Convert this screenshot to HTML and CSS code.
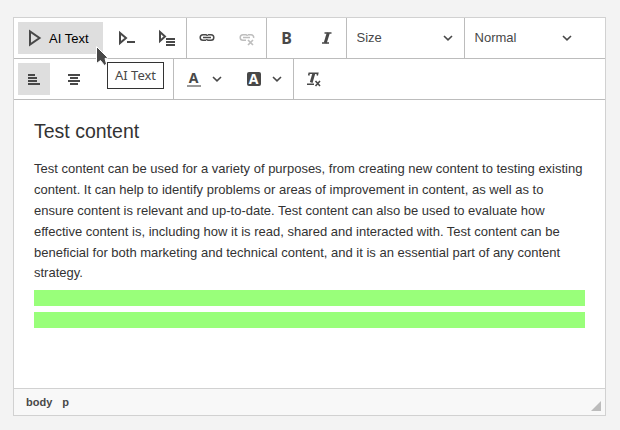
FILE: index.html
```html
<!DOCTYPE html>
<html lang="en">
<head>
<meta charset="utf-8">
<meta name="viewport" content="width=device-width, initial-scale=1">
<title>Editor</title>
<link rel="stylesheet" href="styles.css">
</head>
<body>
<main class="editor">
  <div class="toolbar" role="toolbar" aria-label="Editor toolbar">
    <div class="row">
      <div class="group">
        <div class="tip-anchor">
          <button class="btn btn-label active" type="button">
            <svg class="icon" width="16" height="18" viewBox="0 0 16 18"><path d="M3 2.500V15.500L12.500 9Z" fill="none" stroke="#484848" stroke-width="2"/></svg>
            AI Text
          </button>
          <svg class="cursor" width="16" height="24" viewBox="0 0 16 24"><path d="M1.500 1.500V18.500L5.500 15.500L9.500 20.500L11.500 19L10 13.500L13 13Z" fill="#484848" stroke="#fff" stroke-width="1"/></svg>
          <span class="tooltip" role="tooltip">AI Text</span>
        </div>
        <button class="btn" type="button" aria-label="AI prompt">
          <svg class="icon" width="18" height="18" viewBox="0 0 18 18"><path d="M2 4V14L8 9Z" fill="none" stroke="#484848" stroke-width="2"/><path d="M9 13H17" stroke="#484848" stroke-width="2"/></svg>
        </button>
        <button class="btn" type="button" aria-label="AI commands">
          <svg class="icon" width="18" height="18" viewBox="0 0 18 18"><path d="M2 3V12L7 7.500Z" fill="none" stroke="#484848" stroke-width="2"/><path d="M8 10H17M8 13H17M8 16H17" stroke="#484848" stroke-width="2"/></svg>
        </button>
      </div>
      <div class="group">
        <button class="btn" type="button" aria-label="Link">
          <svg class="icon" width="16" height="16" viewBox="0 0 16 16"><path d="M7 4.700H4A2.700 2.700 0 0 0 4 10.300H7M9 4.700H12A2.700 2.700 0 0 1 12 10.300H9M4 7.500H12M7 4.700Q8.300 4.700 8.300 6M9 10.300Q7.700 10.300 7.700 9" fill="none" stroke="#484848" stroke-width="1.500"/></svg>
        </button>
        <button class="btn" type="button" aria-label="Unlink" disabled>
          <svg class="icon" width="16" height="16" viewBox="0 0 16 16"><path d="M7 10.300H4A2.700 2.700 0 0 1 4 4.700H7M9 4.700H12A2.700 2.700 0 0 1 14.600 8M4 7.500H11M7 4.700Q8.300 4.700 8.300 6" fill="none" stroke="#bebebe" stroke-width="1.500"/><path d="M9 10L14 15M14 10L9 15" stroke="#bebebe" stroke-width="1.700"/></svg>
        </button>
      </div>
      <div class="group">
        <button class="btn glyph" type="button" aria-label="Bold">B</button>
        <button class="btn" type="button" aria-label="Italic">
          <svg class="icon" width="16" height="16" viewBox="0 0 16 16"><path d="M5.500 3H12.500M3 13H10" stroke="#484848" stroke-width="1.600"/><path d="M9.300 3L6.200 13" stroke="#484848" stroke-width="3"/></svg>
        </button>
      </div>
      <div class="group combo">
        <select aria-label="Font size"><option>Size</option><option>12</option><option>14</option></select>
        <svg class="chevron" width="10" height="8" viewBox="0 0 10 8"><path d="M1 2L5 5.800L9 2" fill="none" stroke="#484848" stroke-width="1.600"/></svg>
      </div>
      <div class="group combo">
        <select aria-label="Paragraph format"><option>Normal</option><option>Heading</option></select>
        <svg class="chevron" width="10" height="8" viewBox="0 0 10 8"><path d="M1 2L5 5.800L9 2" fill="none" stroke="#484848" stroke-width="1.600"/></svg>
      </div>
    </div>
    <div class="row">
      <div class="group">
        <button class="btn active" type="button" aria-label="Align left">
          <svg class="icon" width="16" height="16" viewBox="0 0 16 16"><path d="M2 4H9M2 7H11M2 10H11M2 13H14" stroke="#484848" stroke-width="2"/></svg>
        </button>
        <button class="btn" type="button" aria-label="Align center">
          <svg class="icon" width="16" height="16" viewBox="0 0 16 16"><path d="M2 4H14M4 7H12M2 10H14M4 13H12" stroke="#484848" stroke-width="2"/></svg>
        </button>
        <button class="btn" type="button" aria-label="Align right">
          <svg class="icon" width="16" height="16" viewBox="0 0 16 16"><path d="M7 4H14M4 7H14M5 10H14M2 13H14" stroke="#484848" stroke-width="2"/></svg>
        </button>
        <button class="btn" type="button" aria-label="Justify">
          <svg class="icon" width="16" height="16" viewBox="0 0 16 16"><path d="M2 4H14M2 7H14M2 10H14M2 13H14" stroke="#484848" stroke-width="2"/></svg>
        </button>
      </div>
      <div class="group">
        <button class="btn btn-split" type="button" aria-label="Text color">
          <span class="letter letter-line">A</span>
          <svg class="icon" width="10" height="8" viewBox="0 0 10 8"><path d="M1 2L5 5.800L9 2" fill="none" stroke="#484848" stroke-width="1.600"/></svg>
        </button>
        <button class="btn btn-split" type="button" aria-label="Background color">
          <span class="letter letter-box">A</span>
          <svg class="icon" width="10" height="8" viewBox="0 0 10 8"><path d="M1 2L5 5.800L9 2" fill="none" stroke="#484848" stroke-width="1.600"/></svg>
        </button>
      </div>
      <div class="group">
        <button class="btn" type="button" aria-label="Remove format">
          <svg class="icon" width="16" height="16" viewBox="0 0 16 16"><path d="M2.700 4.500L3.200 2.200H11.700L11.200 4.500M1 13.300H8" fill="none" stroke="#484848" stroke-width="1.600"/><path d="M7.800 2.500L5.200 11.500" stroke="#484848" stroke-width="2.800"/><path d="M9.500 10L14 15M14 10L9.500 15" stroke="#484848" stroke-width="1.600"/></svg>
        </button>
      </div>
    </div>
  </div>
  <article class="content">
    <h1>Test content</h1>
    <p>Test content can be used for a variety of purposes, from creating new content to testing existing content. It can help to identify problems or areas of improvement in content, as well as to ensure content is relevant and up-to-date. Test content can also be used to evaluate how effective content is, including how it is read, shared and interacted with. Test content can be beneficial for both marketing and technical content, and it is an essential part of any content strategy.</p>
    <div class="placeholder"></div>
    <div class="placeholder"></div>
  </article>
  <footer class="status">
    <nav class="path" aria-label="Element path"><a href="#">body</a><a href="#">p</a></nav>
    <svg class="grip" width="10" height="10" viewBox="0 0 10 10"><path d="M10 0V10H0Z" fill="#bcbcbc"/></svg>
  </footer>
</main>
</body>
</html>
```
FILE: styles.css
```css
* {
  box-sizing: border-box;
}

body {
  margin: 0;
  min-height: 100vh;
  padding: 17px 14px 14px 13px;
  display: flex;
  background: #f3f3f3;
  color: #333;
  font: 13px "Liberation Sans", Arial, sans-serif;
}

.editor {
  flex: 1;
  min-width: 0;
  display: flex;
  flex-direction: column;
  border: 1px solid #d1d1d1;
  background: #fff;
}

.row {
  display: flex;
  border-bottom: 1px solid #bcbcbc;
}

.group {
  display: flex;
  gap: 8px;
  padding: 4px 3px 4px 4px;
  border-right: 1px solid #bcbcbc;
}

.group:last-child {
  border-right: 0;
}

.btn {
  display: flex;
  align-items: center;
  justify-content: center;
  width: 32px;
  height: 32px;
  margin: 0;
  padding: 0;
  border: 0;
  background: transparent;
  color: #000;
  font: inherit;
}

.btn-label {
  width: auto;
  gap: 6px;
  padding: 0 14px 0 9px;
}

.btn-split {
  width: 52px;
  gap: 11px;
}

.glyph {
  color: #484848;
  font: bold 16px "Noto Sans", sans-serif;
}

.letter {
  width: 14px;
  font: bold 14px/14px "Noto Sans", sans-serif;
  text-align: center;
}

.letter-line {
  border-bottom: 2px solid #999;
  color: #484848;
}

.letter-box {
  border-radius: 2px;
  background: #484848;
  color: #fff;
}

.active {
  background: #dedede;
}

.icon {
  flex: none;
}

.tip-anchor {
  position: relative;
}

.cursor {
  position: absolute;
  top: 23px;
  left: 77px;
}

.tooltip {
  position: absolute;
  z-index: 1;
  top: 40px;
  left: 89px;
  padding: 0 7px;
  border: 1px solid #333;
  background: #fff;
  color: #484848;
  font: 13px/25px "Noto Sans", sans-serif;
  white-space: nowrap;
}

.combo {
  width: 118px;
  padding: 0;
  position: relative;
}

.combo select {
  width: 100%;
  height: 40px;
  padding: 0 26px 2px 10px;
  border: 0;
  appearance: none;
  background: transparent;
  color: #484848;
  font: inherit;
}

.chevron {
  position: absolute;
  top: 16px;
  right: 11px;
  pointer-events: none;
}

.content {
  flex: 1;
  padding: 20px;
  line-height: 1.6;
}

h1 {
  margin: 0 0 16px;
  font-size: 1.5em;
  font-weight: normal;
  line-height: 1.2;
}

p {
  margin: 0;
}

.placeholder {
  height: 16px;
  margin-top: 6px;
  background: #99ff7a;
}

.status {
  display: flex;
  align-items: center;
  justify-content: space-between;
  height: 27px;
  padding: 0 4px 0 12px;
  border-top: 1px solid #d1d1d1;
  background: #f8f8f8;
}

.path {
  display: flex;
  gap: 10px;
}

.path a {
  color: #484848;
  font-size: 11px;
  font-weight: bold;
  text-decoration: none;
}

.grip {
  align-self: flex-end;
  margin-bottom: 4px;
}
```
